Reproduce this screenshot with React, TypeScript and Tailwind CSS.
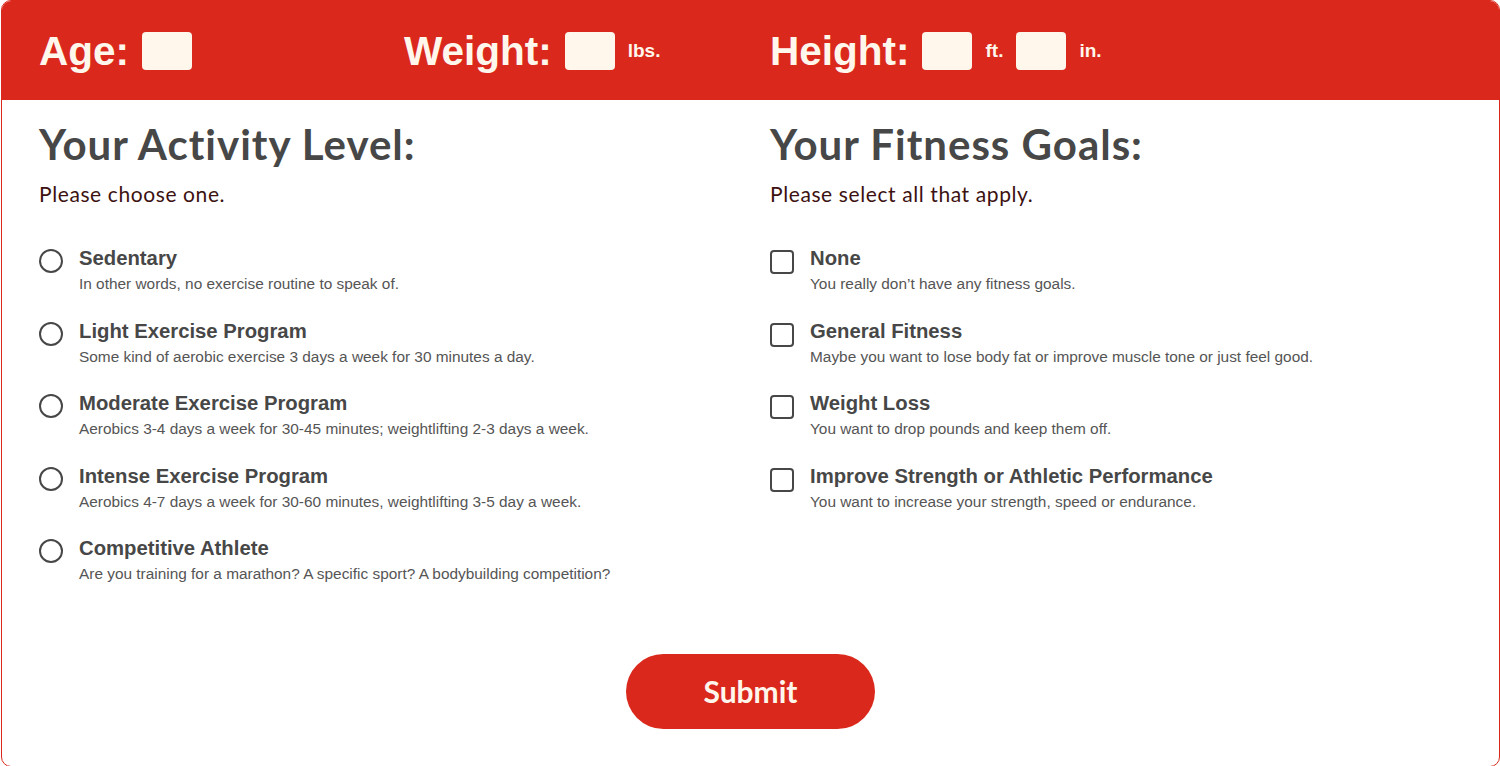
import React from 'react';

const activity = [
  { title: 'Sedentary', desc: 'In other words, no exercise routine to speak of.' },
  { title: 'Light Exercise Program', desc: 'Some kind of aerobic exercise 3 days a week for 30 minutes a day.' },
  { title: 'Moderate Exercise Program', desc: 'Aerobics 3-4 days a week for 30-45 minutes; weightlifting 2-3 days a week.' },
  { title: 'Intense Exercise Program', desc: 'Aerobics 4-7 days a week for 30-60 minutes, weightlifting 3-5 day a week.' },
  { title: 'Competitive Athlete', desc: 'Are you training for a marathon? A specific sport? A bodybuilding competition?' },
];

const goals = [
  { title: 'None', desc: 'You really don\u2019t have any fitness goals.' },
  { title: 'General Fitness', desc: 'Maybe you want to lose body fat or improve muscle tone or just feel good.' },
  { title: 'Weight Loss', desc: 'You want to drop pounds and keep them off.' },
  { title: 'Improve Strength or Athletic Performance', desc: 'You want to increase your strength, speed or endurance.' },
];

const Box: React.FC = () => (
  <input type="text" className="w-[50px] h-[38px] rounded-[4px] bg-[#fff6ec] border-0 outline-none" />
);

const Label: React.FC<{ text: string }> = ({ text }) => (
  <span className="text-[40.5px] leading-[48px] font-bold">{text}</span>
);

const Unit: React.FC<{ text: string }> = ({ text }) => (
  <span className="text-[19px] font-bold leading-[24px]">{text}</span>
);

const Option: React.FC<{ title: string; desc: string; kind: 'radio' | 'check' }> = ({ title, desc, kind }) => (
  <label className="flex items-start gap-4 cursor-pointer">
    {kind === 'radio' ? (
      <span className="mt-[3px] w-6 h-6 shrink-0 rounded-full border-2 border-[#474747]" />
    ) : (
      <span className="mt-[4px] w-6 h-6 shrink-0 rounded-[4px] border-2 border-[#474747]" />
    )}
    <span className="flex flex-col">
      <span className="text-[20.3px] leading-[24px] font-bold text-[#474747]">{title}</span>
      <span className="mt-1 text-[15.4px] leading-[20px] text-[#555555]">{desc}</span>
    </span>
  </label>
);

const Section: React.FC<{ heading: string; sub: string; items: { title: string; desc: string }[]; kind: 'radio' | 'check' }> = ({ heading, sub, items, kind }) => (
  <div>
    <h2 className="text-[42px] leading-[40px] font-bold tracking-[1px] text-[#474747]" style={{ fontFamily: 'Lato, sans-serif' }}>{heading}</h2>
    <p className="mt-[21px] text-[21px] leading-[18px] tracking-[0.6px] text-[#3d1111]" style={{ fontFamily: 'Lato, sans-serif' }}>{sub}</p>
    <div className="mt-[43px] flex flex-col gap-[24.5px]">
      {items.map((it) => (
        <Option key={it.title} title={it.title} desc={it.desc} kind={kind} />
      ))}
    </div>
  </div>
);

export default function App() {
  return (
    <div className="w-[1500px] h-[766px] pl-px bg-white" style={{ fontFamily: '"Liberation Sans", Arial, sans-serif' }}>
      <div className="h-[767px] border border-[#da291c] rounded-[10px] overflow-hidden flex flex-col">
        <div className="h-[99px] bg-[#da291c] text-[#fff6ec] flex items-center pl-[37px] shrink-0">
          <div className="w-[365px] flex items-center gap-[13px]">
            <Label text="Age:" />
            <Box />
          </div>
          <div className="w-[366px] flex items-center gap-[13px]">
            <Label text="Weight:" />
            <Box />
            <Unit text="lbs." />
          </div>
          <div className="flex items-center gap-[13px]">
            <Label text="Height:" />
            <Box />
            <Unit text="ft." />
            <Box />
            <Unit text="in." />
          </div>
        </div>
        <div className="pl-[37px] pt-6">
          <div className="grid grid-cols-[731px_1fr]">
            <Section heading="Your Activity Level:" sub="Please choose one." items={activity} kind="radio" />
            <Section heading="Your Fitness Goals:" sub="Please select all that apply." items={goals} kind="check" />
          </div>
          <div className="flex justify-center mt-[70px] pr-[37px]">
            <button className="w-[249px] h-[75px] rounded-full bg-[#da291c] text-[#fff6ec] text-[30px] font-bold" style={{ fontFamily: 'Lato, sans-serif' }}>
              Submit
            </button>
          </div>
        </div>
      </div>
    </div>
  );
}
